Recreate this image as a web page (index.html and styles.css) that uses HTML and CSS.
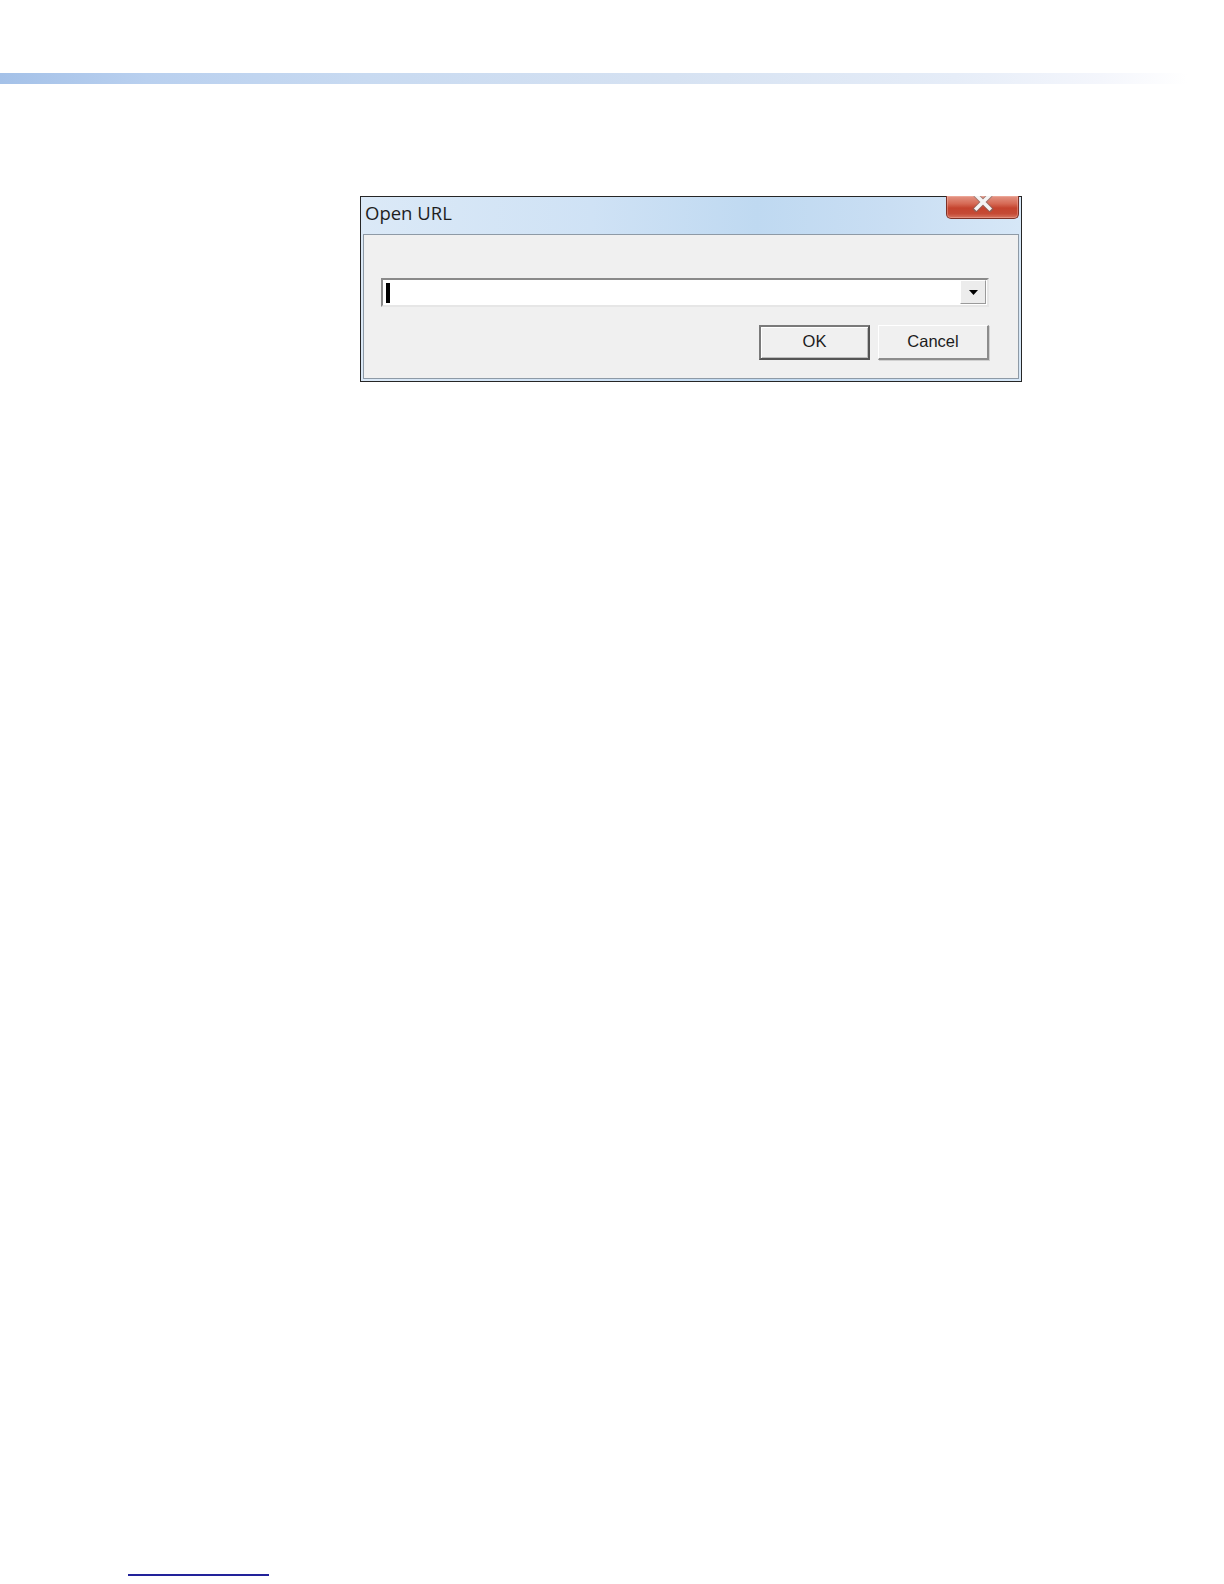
FILE: index.html
```html
<!DOCTYPE html>
<html lang="en">
<head>
<meta charset="utf-8">
<title>Open URL</title>
<link rel="stylesheet" href="styles.css">
</head>
<body>
<div class="page">
  <div class="top-rule"></div>

  <div class="dialog">
    <div class="titlebar">
      <span class="title">Open URL</span>
      <div class="close-btn" aria-label="Close">
        <svg width="24" height="18" viewBox="0 0 24 18" aria-hidden="true">
          <path d="M5 1 L19 15 M19 1 L5 15" stroke="#6e6e6e" stroke-width="5.4" stroke-linecap="square" fill="none" opacity="0.55"/>
          <path d="M5.5 1.5 L18.5 14.5 M18.5 1.5 L5.5 14.5" stroke="#f4f4f4" stroke-width="3.6" stroke-linecap="square" fill="none"/>
        </svg>
      </div>
    </div>
    <div class="panel">
      <div class="combo">
        <div class="combo-field"><span class="caret"></span></div>
        <div class="combo-btn">
          <svg width="9" height="5" viewBox="0 0 9 5" aria-hidden="true"><path d="M0 0 H9 L4.5 5 Z" fill="#000"/></svg>
        </div>
      </div>
      <div class="buttons">
        <div class="btn btn-default">OK</div>
        <div class="btn">Cancel</div>
      </div>
    </div>
  </div>

  <div class="link-rule"></div>
</div>
</body>
</html>
```

FILE: styles.css
```css
html, body {
  margin: 0;
  padding: 0;
  background: #ffffff;
}

.page {
  height: 1584px;
  display: flex;
  flex-direction: column;
  font-family: "Liberation Sans", Arial, sans-serif;
}

.top-rule {
  margin-top: 73px;
  height: 11px;
  width: 100%;
  background: linear-gradient(to right,
    #a4c1e8 0%,
    #b9d0ef 12%,
    #c8daf1 30%,
    #d6e2f2 55%,
    #e6edf8 78%,
    #f4f6fc 90%,
    #ffffff 97%);
}

.dialog {
  margin-top: 112px;
  margin-left: 360px;
  width: 656px;
  height: 182px;
  border: 1px solid #262626;
  background: linear-gradient(to right, #dbe9f7 0%, #cfe2f5 35%, #bfd9f1 60%, #c9def3 80%, #d6e7f7 100%);
  display: flex;
  flex-direction: column;
  padding: 0 2px 2px 2px;
  box-sizing: content-box;
}

.titlebar {
  height: 37px;
  display: flex;
  justify-content: space-between;
  align-items: flex-start;
}

.title {
  font-family: "Open Sans", "Noto Sans", sans-serif;
  font-size: 18.5px;
  line-height: 24px;
  color: #1e1e1e;
  margin-top: 4px;
  margin-left: 2px;
}

.close-btn {
  width: 71px;
  height: 22px;
  margin-right: 0;
  margin-top: -1px;
  border: 1px solid #7d3127;
  border-top: none;
  border-radius: 0 0 5px 5px;
  background: linear-gradient(to bottom, #e39585 0%, #d66a55 35%, #c4432e 55%, #c54a35 80%, #d67560 100%);
  display: flex;
  align-items: flex-start;
  justify-content: center;
  overflow: hidden;
  box-shadow: inset 0 0 0 1px rgba(255, 200, 190, 0.35);
}

.close-btn svg {
  margin-top: -2px;
}

.panel {
  flex: 1;
  background: #f0f0f0;
  border: 1px solid #8e9aa6;
  padding: 43px 29px 15px 17px;
  display: flex;
  flex-direction: column;
}

.combo {
  height: 25px;
  display: flex;
  background: #ffffff;
  border-top: 2px solid #8a8a8a;
  border-left: 2px solid #8a8a8a;
  border-bottom: 2px solid #e6e6e6;
  border-right: 2px solid #e6e6e6;
}

.combo-field {
  flex: 1;
  display: flex;
  align-items: center;
  padding-left: 3px;
}

.caret {
  width: 4px;
  height: 20px;
  background: #000;
}

.combo-btn {
  width: 26px;
  height: 24px;
  margin: 0 1px 1px 0;
  background: #ececec;
  border-top: 1px solid #ffffff;
  border-left: 1px solid #ffffff;
  border-right: 1px solid #9a9a9a;
  border-bottom: 1px solid #9a9a9a;
  box-sizing: border-box;
  display: flex;
  align-items: center;
  justify-content: center;
}

.buttons {
  margin-top: 18px;
  display: flex;
  justify-content: flex-end;
  gap: 8px;
}

.btn {
  width: 111px;
  height: 35px;
  box-sizing: border-box;
  background: #f0f0f0;
  border-top: 1px solid #ffffff;
  border-left: 1px solid #ffffff;
  border-right: 2px solid #8c8c8c;
  border-bottom: 2px solid #8c8c8c;
  box-shadow: 1px 1px 0 #d0d0d0;
  display: flex;
  align-items: center;
  justify-content: center;
  font-size: 16.5px;
  color: #1c1c1c;
  padding-bottom: 2px;
}

.btn-default {
  border: 2px solid #7a7a7a;
  border-right-color: #555;
  border-bottom-color: #555;
  box-shadow: inset 1px 1px 0 #ffffff, inset -1px -1px 0 #bdbdbd;
}

.link-rule {
  margin-top: auto;
  margin-bottom: 8px;
  margin-left: 128px;
  width: 141px;
  height: 2px;
  background: #22229a;
}
```
